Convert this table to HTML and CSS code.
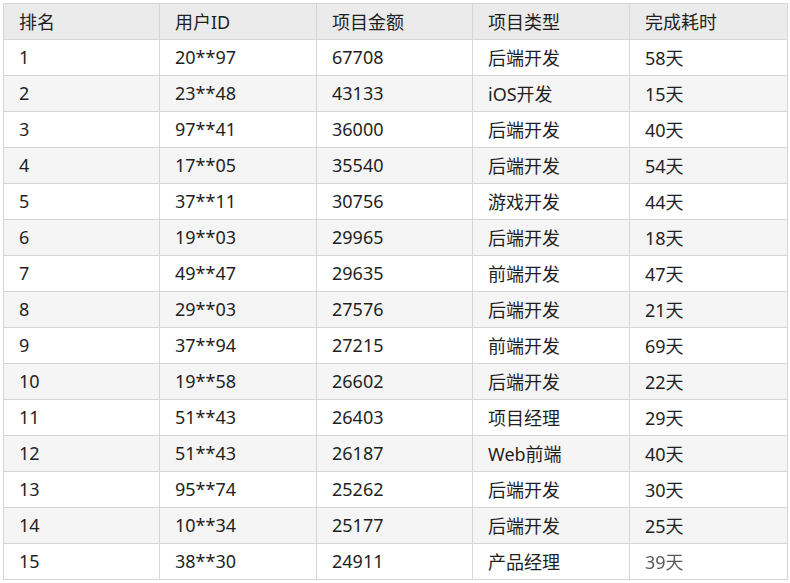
FILE: index.html
```html
<!DOCTYPE html>
<html lang="zh-CN">
<head>
<meta charset="utf-8">
<link rel="stylesheet" href="styles.css">
</head>
<body>
<table class="rank">
<colgroup>
<col class="c1"><col class="c2"><col class="c3"><col class="c4"><col class="c5">
</colgroup>
<thead>
<tr><th>排名</th><th>用户ID</th><th>项目金额</th><th>项目类型</th><th>完成耗时</th></tr>
</thead>
<tbody>
<tr><td>1</td><td>20**97</td><td>67708</td><td>后端开发</td><td>58天</td></tr>
<tr><td>2</td><td>23**48</td><td>43133</td><td>iOS开发</td><td>15天</td></tr>
<tr><td>3</td><td>97**41</td><td>36000</td><td>后端开发</td><td>40天</td></tr>
<tr><td>4</td><td>17**05</td><td>35540</td><td>后端开发</td><td>54天</td></tr>
<tr><td>5</td><td>37**11</td><td>30756</td><td>游戏开发</td><td>44天</td></tr>
<tr><td>6</td><td>19**03</td><td>29965</td><td>后端开发</td><td>18天</td></tr>
<tr><td>7</td><td>49**47</td><td>29635</td><td>前端开发</td><td>47天</td></tr>
<tr><td>8</td><td>29**03</td><td>27576</td><td>后端开发</td><td>21天</td></tr>
<tr><td>9</td><td>37**94</td><td>27215</td><td>前端开发</td><td>69天</td></tr>
<tr><td>10</td><td>19**58</td><td>26602</td><td>后端开发</td><td>22天</td></tr>
<tr><td>11</td><td>51**43</td><td>26403</td><td>项目经理</td><td>29天</td></tr>
<tr><td>12</td><td>51**43</td><td>26187</td><td>Web前端</td><td>40天</td></tr>
<tr><td>13</td><td>95**74</td><td>25262</td><td>后端开发</td><td>30天</td></tr>
<tr><td>14</td><td>10**34</td><td>25177</td><td>后端开发</td><td>25天</td></tr>
<tr><td>15</td><td>38**30</td><td>24911</td><td>产品经理</td><td><span class="blur">39天</span></td></tr>
</tbody>
</table>
</body>
</html>
```
FILE: styles.css
```css
html, body {
  margin: 0;
  padding: 0;
  background: #ffffff;
}
body {
  padding: 3px;
}
.rank {
  width: 784px;
  border-collapse: collapse;
  table-layout: fixed;
  font-family: "Noto Sans", "Noto Sans CJK SC", sans-serif;
  font-size: 18px;
  color: #1f1f1f;
}
.c1 { width: 156px; }
.c2 { width: 157px; }
.c3 { width: 156px; }
.c4 { width: 157px; }
.c5 { width: 158px; }
.rank th,
.rank td {
  border: 1px solid #d6d6d6;
  height: 36px;
  padding: 0 15px 2px 15px;
  text-align: left;
  font-weight: normal;
  box-sizing: border-box;
  white-space: nowrap;
}
.rank th {
  background: #ebebeb;
}
.rank tbody tr:nth-child(even) td {
  background: #f5f5f5;
}
.blur {
  color: #5a5a5a;
  filter: blur(0.6px);
}
```
